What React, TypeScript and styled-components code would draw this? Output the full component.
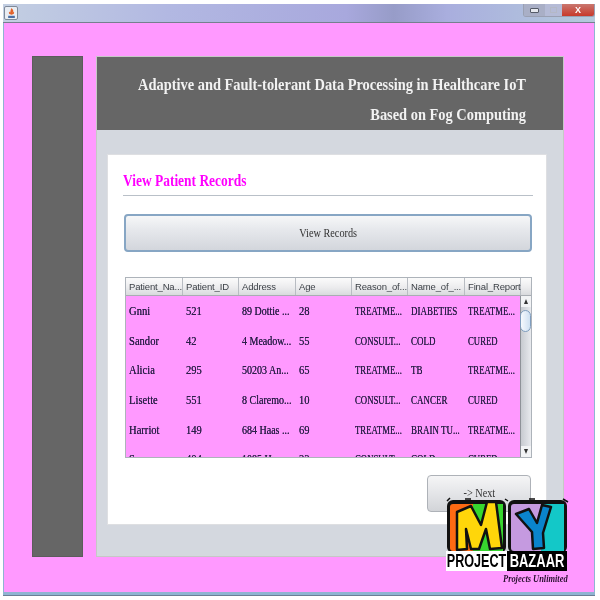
import * as React from 'react';
import styled, { createGlobalStyle } from 'styled-components';

const GlobalStyle = createGlobalStyle`
  html, body {
    margin: 0;
    padding: 0;
    background: #fff;
  }
`;

const serif = `'Liberation Serif', serif`;
const sans = `'Liberation Sans', Arial, sans-serif`;

const Page = styled.div`
  position: relative;
  width: 600px;
  height: 600px;
  overflow: hidden;
  padding: 4px 5px 4px 3px;
  box-sizing: border-box;
  filter: blur(0.35px);
`;

const Window = styled.div`
  height: 592px;
  display: flex;
  flex-direction: column;
  background: #8fb4d2;
  padding: 0 1px 3px 1px;
  box-sizing: border-box;
  border-bottom: 1px solid #6c7f96;
`;

const TitleBar = styled.div`
  height: 19px;
  flex: none;
  display: flex;
  justify-content: space-between;
  align-items: flex-start;
  padding: 2px 0 0 1px;
  box-sizing: border-box;
  background: linear-gradient(90deg, #c3cfe2 0%, #b2b8e2 28%, #a8a8dd 58%, #979cc8 66%, #a9aede 75%, #b4cadc 100%);
  border-bottom: 1px solid #75808f;
  margin: 0 -1px;
`;

const WindowIcon = styled.div`
  width: 12px;
  height: 12px;
  background: #e9edf3;
  border: 1px solid #7f8a99;
  border-radius: 2px;
  display: flex;
  align-items: center;
  justify-content: center;
`;

const Controls = styled.div`
  display: flex;
  margin: -2px 0 0 0;
  height: 12px;
  border: 1px solid #9aa0b2;
  border-top: none;
  border-radius: 0 0 3px 3px;
  overflow: hidden;
`;

const Control = styled.div<{ $w: number; $bg: string }>`
  width: ${p => p.$w}px;
  background: ${p => p.$bg};
  display: flex;
  align-items: center;
  justify-content: center;
  color: #fff;
  font: bold 9px ${sans};
  line-height: 1;
`;

const MinGlyph = styled.div`
  width: 7px;
  height: 3px;
  border: 1px solid #555b68;
  border-radius: 1px;
  background: #e6e8ee;
`;

const MaxGlyph = styled.div`
  width: 5px;
  height: 4px;
  border: 1px solid #b4b8c6;
`;

const Body = styled.div`
  flex: 1;
  display: flex;
  gap: 13px;
  background: #ff99ff;
  padding: 33px 30px 35px 28px;
  box-sizing: border-box;
  min-height: 0;
`;

const Sidebar = styled.div`
  width: 51px;
  flex: none;
  background: #666666;
  border: 1px solid #5c5c5c;
  box-sizing: border-box;
`;

const Main = styled.div`
  flex: 1;
  display: flex;
  flex-direction: column;
  background: #d4d8df;
  border: 1px solid #c6c8c6;
  box-sizing: border-box;
  min-width: 0;
`;

const Header = styled.div`
  height: 73px;
  flex: none;
  background: #666666;
  color: #f2f2f2;
  font: bold 16px ${serif};
  padding: 13px 37px 0 0;
  box-sizing: border-box;
`;

const HeaderLine = styled.div`
  height: 30px;
  line-height: 30px;
  display: flex;
  justify-content: flex-end;
  white-space: nowrap;
`;

// Cambria-like widths: Liberation Serif squeezed horizontally
const Squeezed = styled.span<{ $x: number; $origin?: string }>`
  display: inline-block;
  flex: none;
  white-space: nowrap;
  transform: scaleX(${p => p.$x});
  transform-origin: ${p => p.$origin || 'left'} center;
`;

const ContentArea = styled.div`
  flex: 1;
  padding: 25px 17px 32px 11px;
  min-height: 0;
  display: flex;
`;

const Card = styled.div`
  flex: 1;
  background: #fff;
  padding: 15px 13px 0 15px;
  box-sizing: border-box;
  box-shadow: 0 0 0 1px #dedfe2;
  min-width: 0;
`;

const PageTitle = styled.div`
  color: #ff00ff;
  font: bold 16px/22px ${serif};
  height: 25px;
  border-bottom: 1px solid #b9c0c8;
`;

const ViewButton = styled.button`
  display: block;
  width: 408px;
  height: 38px;
  margin: 18px 0 0 1px;
  border: 2px solid #87a6c4;
  border-radius: 4px;
  background: linear-gradient(180deg, #f6f7f8 0%, #e6e8ec 40%, #d3d6dc 100%);
  color: #333;
  font: 12.5px ${serif};
  padding: 0;
`;

const TableWrap = styled.div`
  width: 407px;
  height: 181px;
  margin: 25px 0 0 2px;
  border: 1px solid #adb3ba;
  box-sizing: border-box;
  display: flex;
  flex-direction: column;
  overflow: hidden;
`;

const HeadRow = styled.div`
  height: 18px;
  flex: none;
  display: flex;
  background: linear-gradient(180deg, #fbfbfb 0%, #ececee 55%, #d9dadd 100%);
  border-bottom: 1px solid #a9adb3;
  box-sizing: border-box;
`;

const HeadCell = styled.div<{ $w: number }>`
  width: ${p => p.$w}px;
  flex: none;
  box-sizing: border-box;
  padding-left: 3px;
  border-right: 1px solid #b8bcc2;
  color: #3a3f45;
  font: 9.5px/17px ${sans};
  letter-spacing: -0.15px;
  white-space: nowrap;
`;

const TableBody = styled.div`
  flex: 1;
  display: flex;
  min-height: 0;
`;

const Rows = styled.div`
  flex: 1;
  background: #ff99ff;
  overflow: hidden;
  padding-top: 1px;
`;

const Row = styled.div`
  height: 29.7px;
  display: flex;
`;

const Cell = styled.div<{ $w: number }>`
  width: ${p => p.$w}px;
  flex: none;
  box-sizing: border-box;
  padding-left: 3px;
  color: #2c1f4a;
  font: 11.5px/29.7px ${serif};
  text-shadow: 0 0 0.6px #2c1f4a;
  white-space: nowrap;
`;

const ScrollBar = styled.div`
  width: 11px;
  flex: none;
  background: linear-gradient(90deg, #c7cad0, #e8eaee);
  border-left: 1px solid #8e9298;
  box-sizing: border-box;
  display: flex;
  flex-direction: column;
  align-items: center;
  position: relative;
`;

const ScrollArrow = styled.div<{ $down?: boolean }>`
  height: 11px;
  width: 100%;
  flex: none;
  background: #f2f3f5;
  display: flex;
  align-items: center;
  justify-content: center;
  &::after {
    content: '';
    border-left: 2.5px solid transparent;
    border-right: 2.5px solid transparent;
    ${p => (p.$down ? 'border-top' : 'border-bottom')}: 5px solid #333;
  }
`;

const Thumb = styled.div`
  position: absolute;
  top: 14px;
  left: -1px;
  width: 11px;
  height: 22px;
  border-radius: 6px;
  background: linear-gradient(90deg, #f6f9fd, #cfe0f2);
  border: 1px solid #7f9dbe;
  box-sizing: border-box;
`;

const ScrollFill = styled.div`
  flex: 1;
`;

const Footer = styled.div`
  display: flex;
  justify-content: flex-end;
  padding: 17px 2px 0 0;
`;

const NextButton = styled.button`
  width: 104px;
  height: 37px;
  border: 1px solid #aeb2b8;
  border-radius: 4px;
  background: linear-gradient(180deg, #f5f5f6 0%, #e4e5e8 50%, #d2d4d8 100%);
  color: #333;
  font: 12.5px ${serif};
  padding: 0;
`;

const Logo = styled.div`
  position: absolute;
  left: 445px;
  top: 497px;
  width: 125px;
  height: 90px;
`;

const LogoWords = styled.div`
  position: absolute;
  left: 1px;
  top: 54px;
  width: 121px;
  height: 20px;
  display: flex;
  font: bold 18px/20px ${sans};
  background: #000;
`;

const LogoPart = styled.div<{ $dark?: boolean }>`
  width: ${p => (p.$dark ? 60 : 61)}px;
  height: 20px;
  display: flex;
  justify-content: center;
  overflow: hidden;
  background: ${p => (p.$dark ? '#000' : '#fff')};
  color: ${p => (p.$dark ? '#fff' : '#000')};
`;

const Tagline = styled.div`
  position: absolute;
  left: 58px;
  top: 75px;
  font: italic bold 10px/13px ${serif};
  color: #2a1030;
  white-space: nowrap;
`;

const columns = [57, 56, 57, 56, 56, 57, 56];
const squeeze = [0.92, 0.92, 0.87, 0.92, 0.76, 0.78, 0.76];
const headers = ['Patient_Na...', 'Patient_ID', 'Address', 'Age', 'Reason_of...', 'Name_of_...', 'Final_Report'];
const records = [
  ['Gnni', '521', '89 Dottie ...', '28', 'TREATME...', 'DIABETIES', 'TREATME...'],
  ['Sandor', '42', '4 Meadow...', '55', 'CONSULT...', 'COLD', 'CURED'],
  ['Alicia', '295', '50203 An...', '65', 'TREATME...', 'TB', 'TREATME...'],
  ['Lisette', '551', '8 Claremo...', '10', 'CONSULT...', 'CANCER', 'CURED'],
  ['Harriot', '149', '684 Haas ...', '69', 'TREATME...', 'BRAIN TU...', 'TREATME...'],
  ['Susan', '404', '1085 Har...', '33', 'CONSULT...', 'COLD', 'CURED'],
];

const LogoArt = () => (
  <svg width="125" height="58" viewBox="0 0 125 58" style={{ position: 'absolute', left: 0, top: 0 }}>
    <rect x="2" y="3" width="59" height="53" rx="6" fill="#111" />
    <rect x="63" y="3" width="59" height="53" rx="6" fill="#111" />
    <rect x="5" y="7" width="53" height="47" rx="3" fill="#ff6a13" />
    <path d="M28 7h30v47H28z" fill="#37d62f" />
    <rect x="66" y="7" width="53" height="47" rx="3" fill="#c59ae0" />
    <path d="M96 7h23v47H96z" fill="#13c8c8" />
    <path d="M12 15l14-6 10 19 6-23h9l6 46-12 1-4-20-7 20-8 0-5-20 1 20-10 1z" fill="#ffd60a" stroke="#111" strokeWidth="2.5" strokeLinejoin="round" />
    <path d="M71 17l13-5 8 14 5-18 9 2-8 26 1 15-11 1-1-17z" fill="#0a84cc" stroke="#111" strokeWidth="2.5" strokeLinejoin="round" />
    <path d="M2 4l3-3M20 2h6M60 2l3 2M84 2h6M118 2l5 3" stroke="#111" strokeWidth="1.5" fill="none" />
  </svg>
);

export default function App() {
  return (
    <Page>
      <GlobalStyle />
      <Window>
        <TitleBar>
          <WindowIcon>
            <svg width="9" height="10" viewBox="0 0 8 9">
              <path d="M4 0c2 2 2 3 1 4 1 0 1-1 1-1 1 2 0 3-2 3S1 5 2 3c0 1 1 1 1 1 0-1 0-2 1-4z" fill="#e2622a" />
              <path d="M1 7h6v2H1z" fill="#4a6fa5" />
            </svg>
          </WindowIcon>
          <Controls>
            <Control $w={21} $bg="#a9afc6"><MinGlyph /></Control>
            <Control $w={17} $bg="#b5bbd6"><MaxGlyph /></Control>
            <Control $w={32} $bg="linear-gradient(180deg, #c9776f, #c8392b)">X</Control>
          </Controls>
        </TitleBar>
        <Body>
          <Sidebar />
          <Main>
            <Header>
              <HeaderLine>
                <Squeezed $x={0.9} $origin="right">Adaptive and Fault-tolerant Data Processing in Healthcare IoT</Squeezed>
              </HeaderLine>
              <HeaderLine>
                <Squeezed $x={0.9} $origin="right">Based on Fog Computing</Squeezed>
              </HeaderLine>
            </Header>
            <ContentArea>
              <Card>
                <PageTitle>
                  <Squeezed $x={0.84}>View Patient Records</Squeezed>
                </PageTitle>
                <ViewButton>
                  <Squeezed $x={0.82} $origin="center">View Records</Squeezed>
                </ViewButton>
                <TableWrap>
                  <HeadRow>
                    {headers.map((h, i) => (
                      <HeadCell key={h} $w={columns[i]}>{h}</HeadCell>
                    ))}
                  </HeadRow>
                  <TableBody>
                    <Rows>
                      {records.map(r => (
                        <Row key={r[0]}>
                          {r.map((c, i) => (
                            <Cell key={i} $w={columns[i]}>
                              <Squeezed $x={squeeze[i]}>{c}</Squeezed>
                            </Cell>
                          ))}
                        </Row>
                      ))}
                    </Rows>
                    <ScrollBar>
                      <ScrollArrow />
                      <Thumb />
                      <ScrollFill />
                      <ScrollArrow $down />
                    </ScrollBar>
                  </TableBody>
                </TableWrap>
                <Footer>
                  <NextButton>
                    <Squeezed $x={0.82} $origin="center">-&gt; Next</Squeezed>
                  </NextButton>
                </Footer>
              </Card>
            </ContentArea>
          </Main>
        </Body>
      </Window>
      <Logo>
        <LogoArt />
        <LogoWords>
          <LogoPart>
            <Squeezed $x={0.7} $origin="center">PROJECT</Squeezed>
          </LogoPart>
          <LogoPart $dark>
            <Squeezed $x={0.72} $origin="center">BAZAAR</Squeezed>
          </LogoPart>
        </LogoWords>
        <Tagline>
          <Squeezed $x={0.84}>Projects Unlimited</Squeezed>
        </Tagline>
      </Logo>
    </Page>
  );
}
